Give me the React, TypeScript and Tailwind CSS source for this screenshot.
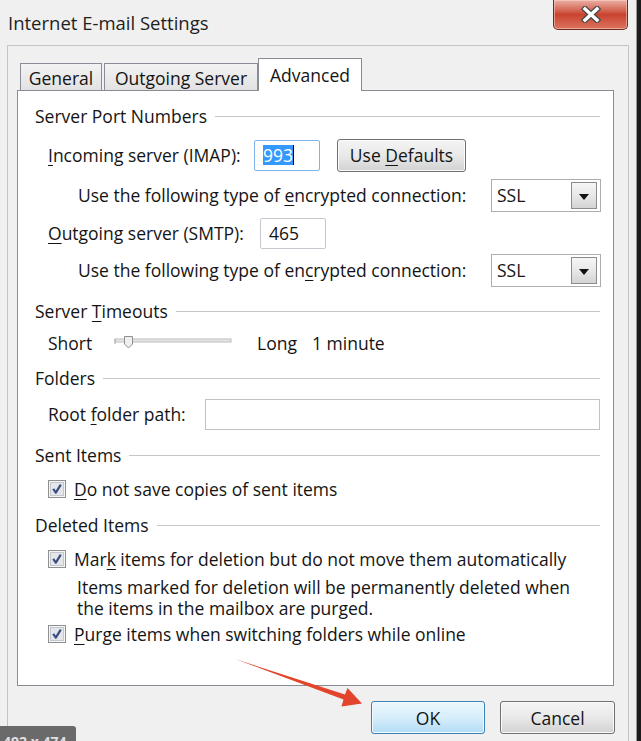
import React from "react";

function U({ children }: { children: React.ReactNode }) {
  return (
    <span className="underline decoration-1 underline-offset-[3px]">
      {children}
    </span>
  );
}

function GroupHeader({
  title,
  className,
}: {
  title: React.ReactNode;
  className: string;
}) {
  return (
    <div className={`flex h-[24px] items-center pl-[17px] pr-[13px] ${className}`}>
      <span className="whitespace-nowrap">{title}</span>
      <div className="ml-[8px] h-px flex-1 bg-[#c6c6c6]" />
    </div>
  );
}

function CheckBox() {
  return (
    <svg width="18" height="18" viewBox="0 0 18 18" className="shrink-0">
      <rect x="0.5" y="0.5" width="17" height="17" fill="#f6f6f6" stroke="#8e8f8f" />
      <rect x="2.5" y="2.5" width="13" height="13" fill="#e4e6ea" stroke="#c3c7ce" />
      <path
        d="M5.2 8.8 L7.8 12.6 L12.8 4.6"
        stroke="#3b4d82"
        strokeWidth="2.2"
        fill="none"
        strokeLinejoin="round"
      />
    </svg>
  );
}

function Select() {
  return (
    <div className="flex h-[33px] w-[110px] items-center border border-[#abadb3] bg-white">
      <span className="flex-1 pl-[5px]">SSL</span>
      <div className="mr-[3px] flex h-[27px] w-[26px] items-center justify-center border border-[#8c8c8c] bg-linear-to-b from-[#f6f6f6] via-[#e8e8e8] to-[#d3d3d3] pt-[3px]">
        <svg width="10" height="6" viewBox="0 0 10 6">
          <path d="M0 0 H10 L5 6 Z" fill="#111" />
        </svg>
      </div>
    </div>
  );
}

function CheckRow({
  className,
  children,
}: {
  className: string;
  children: React.ReactNode;
}) {
  return (
    <div className={`flex h-[24px] items-center pl-[30px] ${className}`}>
      <CheckBox />
      <span className="ml-[8px] whitespace-nowrap">{children}</span>
    </div>
  );
}

export default function App() {
  return (
    <div className="relative flex h-[741px] w-[641px] overflow-hidden bg-[#f0f0f0] font-['Open_Sans',sans-serif] text-[17.5px] leading-[24px] text-[#141414]">
      <div className="flex w-[636px] flex-col">
        {/* title bar */}
        <div className="flex h-[45px] items-start justify-between">
          <div className="ml-[8px] mt-[10px] text-[18.5px] leading-[26px] text-[#1e1e1e]">
            Internet E-mail Settings
          </div>
          <div className="mr-[8px] flex h-[30px] w-[75px] items-center justify-center rounded-b-[5px] border border-t-0 border-[#6e2b20] bg-linear-to-b from-[#eab0a6] via-[#c8432f] to-[#dc735f] shadow-[inset_0_0_0_1px_rgba(255,220,210,0.5)]">
            <svg width="22" height="17" viewBox="0 0 22 17">
              <path d="M5 3 L17 14 M17 3 L5 14" stroke="#4a4a4a" strokeWidth="6" strokeLinecap="square" />
              <path d="M5 3 L17 14 M17 3 L5 14" stroke="#ffffff" strokeWidth="3.4" strokeLinecap="square" />
            </svg>
          </div>
        </div>

        {/* frame */}
        <div className="ml-[7px] flex w-[622px] flex-1 flex-col border-l border-r border-t border-[#c4c4c4] pl-[9px] pt-[11px]">
          {/* tabs */}
          <div className="flex h-[33px] items-end pl-[3px]">
            <div className="flex h-[27px] w-[82px] items-center justify-center border border-b-0 border-[#898c95] bg-linear-to-b from-[#f3f3f3] to-[#e2e2e2] pt-[2px]">
              General
            </div>
            <div className="ml-[2px] flex h-[27px] w-[154px] items-center justify-center border border-b-0 border-[#898c95] bg-linear-to-b from-[#f3f3f3] to-[#e2e2e2] pt-[2px]">
              Outgoing Server
            </div>
            <div className="relative z-10 -mb-px flex h-[33px] w-[104px] items-center justify-center border border-b-0 border-[#898c95] bg-white">
              Advanced
            </div>
          </div>

          {/* panel */}
          <div className="flex h-[596px] w-[597px] flex-col border border-[#898c95] bg-white">
            <GroupHeader title="Server Port Numbers" className="mt-[13px]" />

            <div className="mt-[9px] flex h-[36px] items-center pl-[30px]">
              <span className="w-[206px] whitespace-nowrap">
                <U>I</U>ncoming server (IMAP):
              </span>
              <div className="flex h-[31px] w-[66px] items-center rounded-[2px] border border-[#7eb4ea] bg-white pl-[8px]">
                <span className="bg-[#3399ff] leading-[20px] text-white">993</span>
                <span className="h-[20px] w-px bg-[#000]" />
              </div>
              <div className="ml-[17px] flex h-[33px] w-[129px] items-center justify-center rounded-[3px] border border-[#707070] bg-linear-to-b from-[#f4f4f4] via-[#e9e9e9] to-[#d2d2d2] shadow-[inset_0_0_0_1px_#fbfbfb]">
                <span>
                  Use <U>D</U>efaults
                </span>
              </div>
            </div>

            <div className="mt-[4px] flex h-[36px] items-center pl-[60px]">
              <span className="w-[413px] whitespace-nowrap">
                Use the following type of <U>e</U>ncrypted connection:
              </span>
              <Select />
            </div>

            <div className="mt-[3px] flex h-[34px] items-center pl-[30px]">
              <span className="w-[212px] whitespace-nowrap">
                <U>O</U>utgoing server (SMTP):
              </span>
              <div className="flex h-[31px] w-[66px] items-center rounded-[2px] border border-[#c5c8ce] bg-white pl-[8px]">
                465
              </div>
            </div>

            <div className="mt-[2px] flex h-[36px] items-center pl-[60px]">
              <span className="w-[413px] whitespace-nowrap">
                Use the following type of en<U>c</U>rypted connection:
              </span>
              <Select />
            </div>

            <GroupHeader
              title={
                <>
                  Server <U>T</U>imeouts
                </>
              }
              className="mt-[11px]"
            />

            <div className="mt-[8px] flex h-[24px] items-center pl-[30px]">
              <span className="w-[65px]">Short</span>
              <svg width="120" height="16" viewBox="0 0 120 16" className="mb-[4px]">
                <rect x="2" y="6" width="116" height="3" fill="#e6e6e6" stroke="#bdbdbd" strokeWidth="1" />
                <path d="M2 6 V11" stroke="#a8a8a8" />
                <path d="M11.5 3.5 H19.5 V11 L15.5 15 L11.5 11 Z" fill="#efefef" stroke="#8f8f8f" />
              </svg>
              <span className="ml-[24px] w-[55px]">Long</span>
              <span>1 minute</span>
            </div>

            <GroupHeader title="Folders" className="mt-[11px]" />

            <div className="mt-[8px] flex h-[32px] items-center pl-[30px]">
              <span className="w-[157px] whitespace-nowrap">
                Root <U>f</U>older path:
              </span>
              <div className="h-[31px] w-[395px] border border-[#c2c2c2] bg-white" />
            </div>

            <GroupHeader title="Sent Items" className="mt-[13px]" />

            <CheckRow className="mt-[10px]">
              <U>D</U>o not save copies of sent items
            </CheckRow>

            <GroupHeader title="Deleted Items" className="mt-[12px]" />

            <CheckRow className="mt-[10px]">
              Mar<U>k</U> items for deletion but do not move them automatically
            </CheckRow>

            <div className="mt-[6px] pl-[59px] leading-[21px]">
              <div>Items marked for deletion will be permanently deleted when</div>
              <div>the items in the mailbox are purged.</div>
            </div>

            <CheckRow className="mt-[3px]">
              <U>P</U>urge items when switching folders while online
            </CheckRow>
          </div>

          {/* buttons */}
          <div className="mt-[15px] flex justify-end gap-[15px] pr-[13px]">
            <div className="flex h-[33px] w-[114px] items-center justify-center rounded-[3px] border border-[#3c7fb1] bg-linear-to-b from-[#ecf7fd] via-[#d7eefb] to-[#b2dcf4] shadow-[inset_0_0_0_1px_#f2fbff]">
              OK
            </div>
            <div className="flex h-[33px] w-[115px] items-center justify-center rounded-[3px] border border-[#707070] bg-linear-to-b from-[#f4f4f4] via-[#e9e9e9] to-[#d2d2d2] shadow-[inset_0_0_0_1px_#fbfbfb]">
              Cancel
            </div>
          </div>
        </div>
      </div>

      {/* window edge */}
      <div className="w-[5px] border-l border-[#9a9a9a] bg-[#1c1c1c]" />

      {/* red annotation arrow */}
      <svg
        className="pointer-events-none absolute left-0 top-0"
        width="641"
        height="741"
        viewBox="0 0 641 741"
      >
        <polygon
          points="235,659 345,694.5 347.5,688 362,703.5 341.5,706.5 343.5,699.5"
          fill="#e2452c"
        />
      </svg>

      {/* screenshot size label */}
      <div className="absolute left-0 top-[726px] h-[16px] w-[76px] overflow-hidden rounded-tr-[3px] bg-[#6a6a6a] pl-[3px] pt-[9px] text-[14px] font-bold leading-[14px] text-[#e0e0e0]">
        492 x 474
      </div>
    </div>
  );
}
